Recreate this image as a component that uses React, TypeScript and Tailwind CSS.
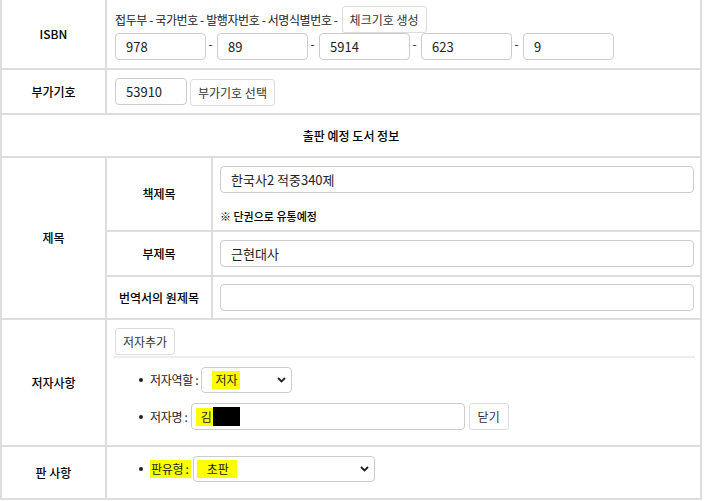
import React from "react";

const Field: React.FC<{ value?: string; className?: string }> = ({ value = "", className = "" }) => (
  <input
    readOnly
    value={value}
    className={`h-[27px] border border-[#cccccc] rounded-[4px] px-[10px] text-[13px] text-[#222] bg-white outline-none ${className}`}
  />
);

const Btn: React.FC<{ children: React.ReactNode; className?: string }> = ({ children, className = "" }) => (
  <button className={`h-[27px] px-[7px] border border-[#dddddd] rounded-[3px] bg-white text-[12px] text-[#333] ${className}`}>
    {children}
  </button>
);

const Chevron = () => (
  <svg width="9" height="6" viewBox="0 0 9 6" className="shrink-0">
    <path d="M1 1l3.5 3.5L8 1" fill="none" stroke="#222" strokeWidth="1.8" />
  </svg>
);

const Bullet = () => <span className="w-[4px] h-[4px] rounded-full bg-[#222] shrink-0 mr-[7px]" />;

const Dash = () => <span className="w-[11px] text-center pr-[2px] pb-[6px]">-</span>;

export default function App() {
  return (
    <div className="w-[706px] h-[501px] bg-white overflow-hidden font-['Noto_Sans_CJK_KR','Malgun_Gothic',sans-serif] text-[12px] text-[#222]">
      <div className="w-[702px] border-x-2 border-b-2 border-[#dddddd]">
        {/* ISBN */}
        <div className="flex h-[70px] border-b-2 border-[#dddddd]">
          <div className="w-[105px] border-r-2 border-[#dddddd] flex items-center justify-center font-medium text-black">ISBN</div>
          <div className="flex-1 pl-[8px] pt-[6px]">
            <div className="flex items-center h-[27px] gap-[4px]">
              <span className="tracking-[-0.4px]">접두부 - 국가번호 - 발행자번호 - 서명식별번호 -</span>
              <Btn>체크기호 생성</Btn>
            </div>
            <div className="flex items-center">
              <Field value="978" className="w-[91px]" />
              <Dash />
              <Field value="89" className="w-[91px]" />
              <Dash />
              <Field value="5914" className="w-[91px]" />
              <Dash />
              <Field value="623" className="w-[91px]" />
              <Dash />
              <Field value="9" className="w-[91px]" />
            </div>
          </div>
        </div>

        {/* 부가기호 */}
        <div className="flex h-[45px] border-b-2 border-[#dddddd]">
          <div className="w-[105px] border-r-2 border-[#dddddd] flex items-center justify-center font-medium text-black">부가기호</div>
          <div className="flex-1 pl-[8px] flex items-center gap-[3px]">
            <Field value="53910" className="w-[72px]" />
            <Btn className="mt-[2px]">부가기호 선택</Btn>
          </div>
        </div>

        {/* 출판 예정 도서 정보 */}
        <div className="flex h-[43px] border-b-2 border-[#dddddd] items-center justify-center font-medium text-black">
          출판 예정 도서 정보
        </div>

        {/* 제목 */}
        <div className="flex h-[162px] border-b-2 border-[#dddddd]">
          <div className="w-[105px] border-r-2 border-[#dddddd] flex items-center justify-center font-medium text-black">제목</div>
          <div className="flex-1 flex flex-col">
            <div className="flex h-[74px] border-b-2 border-[#dddddd]">
              <div className="w-[106px] border-r-2 border-[#dddddd] flex items-center justify-center font-medium text-black">책제목</div>
              <div className="flex-1 pl-[7px] pr-[6px] pt-[8px]">
                <Field value="한국사2 적중340제" className="w-full" />
                <div className="mt-[15px] leading-[16px] font-medium text-[11px] text-black">※ 단권으로 유통예정</div>
              </div>
            </div>
            <div className="flex h-[45px] border-b-2 border-[#dddddd]">
              <div className="w-[106px] border-r-2 border-[#dddddd] flex items-center justify-center font-medium text-black">부제목</div>
              <div className="flex-1 pl-[7px] pr-[6px] flex items-center">
                <Field value="근현대사" className="w-full h-[26px]" />
              </div>
            </div>
            <div className="flex flex-1">
              <div className="w-[106px] border-r-2 border-[#dddddd] flex items-center justify-center font-medium text-black">번역서의 원제목</div>
              <div className="flex-1 pl-[7px] pr-[6px] flex items-center">
                <Field className="w-full" />
              </div>
            </div>
          </div>
        </div>

        {/* 저자사항 */}
        <div className="flex h-[127px] border-b-2 border-[#dddddd]">
          <div className="w-[105px] border-r-2 border-[#dddddd] flex items-center justify-center font-medium text-black">저자사항</div>
          <div className="flex-1 pl-[6px] pr-[5px] pt-[8px]">
            <div className="pl-[2px] pb-[1px] border-b-2 border-[#eeeeee]">
              <Btn className="h-[26px]">저자추가</Btn>
            </div>
            <div className="pl-[26px] mt-[9px] flex flex-col gap-[10px]">
              <div className="flex items-center h-[26px]">
                <Bullet />
                <span className="mr-[3px] tracking-[-0.3px]">저자역할 :</span>
                <div className="w-[91px] h-[26px] border border-[#cccccc] rounded-[4px] flex items-center justify-between pl-[10px] pr-[5px]">
                  <span className="bg-[#ffff00] px-[3px]">저자</span>
                  <Chevron />
                </div>
              </div>
              <div className="flex items-center h-[27px]">
                <Bullet />
                <span className="mr-[3px] tracking-[-0.3px]">저자명 :</span>
                <div className="w-[274px] h-[27px] border border-[#cccccc] rounded-[4px] flex items-center pl-[4px]">
                  <span className="bg-[#ffff00] pl-[5px] pr-[1px] h-[18px] leading-[18px]">김</span>
                  <span className="w-[27px] h-[19px] bg-black" />
                </div>
                <Btn className="ml-[4px] w-[40px] px-0">닫기</Btn>
              </div>
            </div>
          </div>
        </div>

        {/* 판 사항 */}
        <div className="flex h-[51px]">
          <div className="w-[105px] border-r-2 border-[#dddddd] flex items-center justify-center font-medium text-black">판 사항</div>
          <div className="flex-1 pl-[32px] pt-[9px]">
            <div className="flex items-center h-[26px]">
              <Bullet />
              <span className="bg-[#ffff00] pl-[1px] pr-[2px] mr-[2px] tracking-[-0.3px]">판유형 :</span>
              <div className="w-[182px] h-[26px] border border-[#cccccc] rounded-[4px] flex items-center justify-between pl-[3px] pr-[5px]">
                <span className="bg-[#ffff00] pl-[10px] pr-[8px]">초판</span>
                <Chevron />
              </div>
            </div>
          </div>
        </div>
      </div>
    </div>
  );
}
